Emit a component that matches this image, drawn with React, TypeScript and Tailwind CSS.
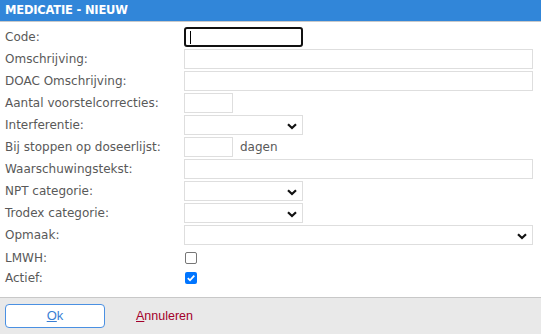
import React from "react";

const font = { fontFamily: '"DejaVu Sans", Verdana, sans-serif' };
const footerFont = { fontFamily: '"Liberation Sans", Arial, sans-serif' };

function Chevron() {
  return (
    <svg width="10" height="7" viewBox="0 0 10 7" className="absolute right-[5px] top-[7px]">
      <path d="M1 1.2 L5 5 L9 1.2" fill="none" stroke="#111" strokeWidth="2.2" />
    </svg>
  );
}

function Field({ w }: { w: string }) {
  return <input className={`h-[20px] border border-[#dedede] bg-white outline-none ${w}`} />;
}

function Select({ w }: { w: string }) {
  return (
    <div className={`relative h-[20px] border border-[#dedede] bg-white ${w}`}>
      <Chevron />
    </div>
  );
}

function Row({ label, children }: { label: string; children: React.ReactNode }) {
  return (
    <div className="flex h-[22px] items-center">
      <div className="w-[179px] text-[12px] text-[#595959]">{label}</div>
      <div className="flex items-center">{children}</div>
    </div>
  );
}

export default function App() {
  return (
    <div className="flex h-[334px] w-[541px] flex-col bg-white" style={font}>
      <div className="h-[22px] border-b border-[#c9c9c9] bg-[#3186d9] pl-[5px] text-[11.5px] font-bold leading-[21px] tracking-[-0.2px] text-white">
        MEDICATIE - NIEUW
      </div>
      <div className="flex-1 pl-[5px] pt-[4px]">
        <Row label="Code:">
          <div className="relative h-[20px] w-[119px] rounded-[3px] border-2 border-[#111]">
            <span className="absolute left-[4px] top-[2px] h-[13px] w-px bg-black" />
          </div>
        </Row>
        <Row label="Omschrijving:">
          <Field w="w-[349px]" />
        </Row>
        <Row label="DOAC Omschrijving:">
          <Field w="w-[349px]" />
        </Row>
        <Row label="Aantal voorstelcorrecties:">
          <Field w="w-[49px]" />
        </Row>
        <Row label="Interferentie:">
          <Select w="w-[119px]" />
        </Row>
        <Row label="Bij stoppen op doseerlijst:">
          <Field w="w-[49px]" />
          <span className="ml-[7px] text-[12px] text-[#595959]">dagen</span>
        </Row>
        <Row label="Waarschuwingstekst:">
          <Field w="w-[349px]" />
        </Row>
        <Row label="NPT categorie:">
          <Select w="w-[119px]" />
        </Row>
        <Row label="Trodex categorie:">
          <Select w="w-[119px]" />
        </Row>
        <Row label="Opmaak:">
          <Select w="w-[349px]" />
        </Row>
        <div className="flex h-[21px] items-center pt-[3px]">
          <div className="w-[180px] text-[12px] text-[#595959]">LMWH:</div>
          <span className="h-[12px] w-[12px] rounded-[2px] border border-[#767676] bg-white" />
        </div>
        <div className="flex h-[21px] items-center">
          <div className="w-[180px] text-[12px] text-[#595959]">Actief:</div>
          <span className="flex h-[12px] w-[12px] items-center justify-center rounded-[2px] bg-[#0075ff]">
            <svg width="10" height="10" viewBox="0 0 10 10">
              <path d="M1.8 5.2 L4 7.3 L8.3 2.6" fill="none" stroke="white" strokeWidth="1.8" />
            </svg>
          </span>
        </div>
      </div>
      <div
        className="flex h-[37px] items-center gap-[31px] border-t border-[#c8c8c8] bg-[#e9e9e9] pl-[5px]"
        style={footerFont}
      >
        <button className="h-[24px] w-[100px] rounded-[4px] border border-[#4a90e2] bg-white text-[13px] text-[#3a7fd4]">
          <span className="underline">O</span>k
        </button>
        <span className="text-[12.5px] text-[#a3002b]">
          <span className="underline">A</span>nnuleren
        </span>
      </div>
    </div>
  );
}
